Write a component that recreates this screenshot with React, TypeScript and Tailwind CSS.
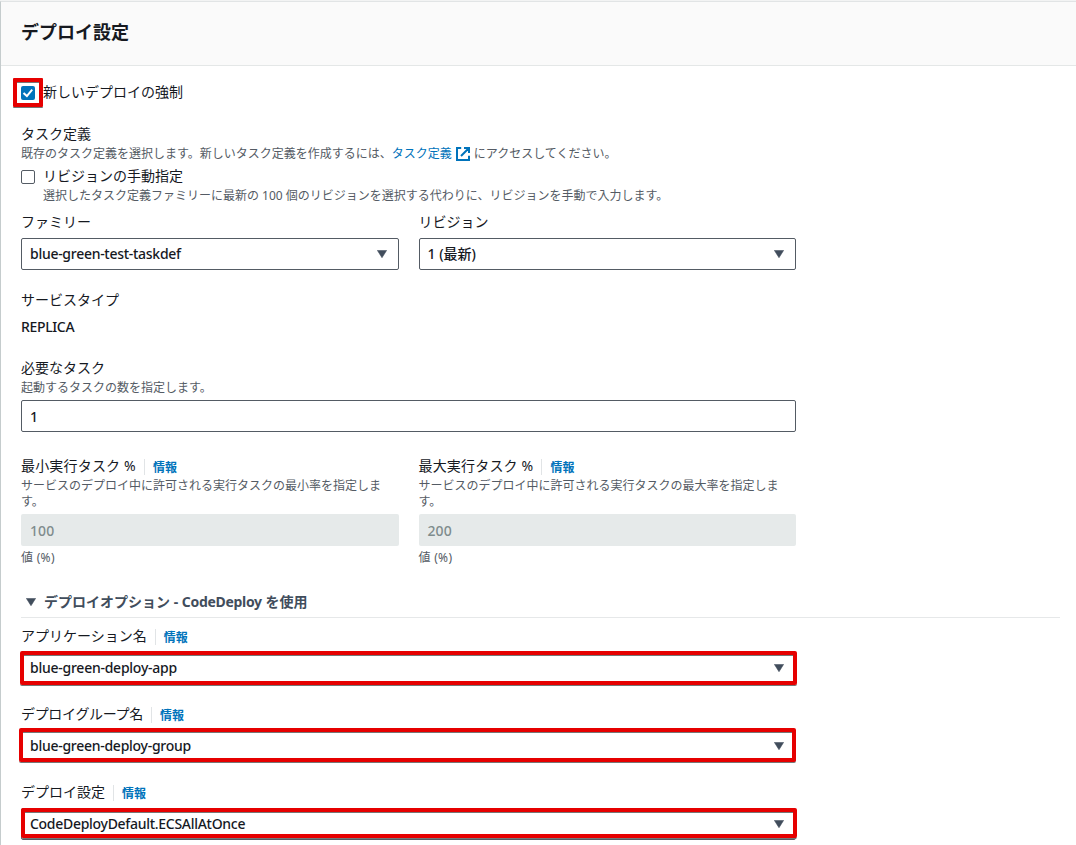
import type { ReactNode } from 'react';

function Caret({ className = '' }: { className?: string }) {
  return (
    <svg className={`h-2 w-[10px] shrink-0 ${className}`} viewBox="0 0 10 8">
      <path d="M0.4 0.4h9.2L5 7.7z" fill="#414d5c" stroke="#414d5c" strokeWidth="0.6" strokeLinejoin="round" />
    </svg>
  );
}

function Label({ children, info = false, tracking = '' }: { children: ReactNode; info?: boolean; tracking?: string }) {
  return (
    <div className="flex h-[22px] items-center whitespace-nowrap text-sm leading-[22px]">
      <span className={`-mt-0.5 ${tracking}`}>{children}</span>
      {info && (
        <span className="ml-2 flex h-4 items-center border-l border-[#e1e4e6] pl-2 pt-0.5 text-xs font-bold text-[#0073bb]">
          情報
        </span>
      )}
    </div>
  );
}

function Hint({ children }: { children: ReactNode }) {
  return <p className="text-xs leading-4 text-[#545b64]">{children}</p>;
}

function Select({ value, highlight = '', tracking = '' }: { value: string; highlight?: string; tracking?: string }) {
  return (
    <div className="relative mt-1 flex h-8 items-center justify-between rounded-[2px] border border-[#545b64] bg-white pl-2 pr-[11px]">
      <span className={`text-sm font-medium leading-[22px] ${tracking}`}>{value}</span>
      <Caret />
      {highlight && (
        <div
          className={`absolute rounded-[2px] border-4 border-[#e60000] shadow-[0_1px_0_#777,inset_0_1px_0_#777] ${highlight}`}
        />
      )}
    </div>
  );
}

function DisabledField({ value }: { value: string }) {
  return (
    <div className="mt-1 flex h-8 items-center rounded-[2px] bg-[#e6eaea] pl-[9px] pt-0.5 text-sm font-medium tracking-[0.1px] text-[#7f8c8d]">
      {value}
    </div>
  );
}

function ExternalIcon() {
  return (
    <svg className="ml-1 mr-1 inline-block h-[14px] w-[14px] -translate-y-px align-middle" viewBox="0 0 14 14" fill="none" stroke="#0073bb" strokeWidth="2">
      <path d="M5.2 1H1v12h12V8.8M8 1h5v5M13 1L5 9" />
    </svg>
  );
}

export default function App() {
  return (
    <div className="h-[845px] w-full overflow-hidden bg-[#f2f3f3] pt-px font-['Noto_Sans','Noto_Sans_CJK_JP',sans-serif] text-[#16191f]">
      <section className="h-[844px] border-l border-t border-l-[#c5cccd] border-t-[#e1e4e5] bg-white">
        <header className="flex h-16 items-center border-b border-[#e4e7e7] bg-[#fafafa] pb-1 pl-5">
          <h2 className="text-lg font-bold leading-[22px]">デプロイ設定</h2>
        </header>
        <div className="pl-5 pr-4 pt-4">
          <div className="flex h-[22px] items-center">
            <div className="relative flex h-[14px] w-[14px] items-center justify-center rounded-[2px] bg-[#0073bb]">
              <svg className="h-[14px] w-[14px]" viewBox="0 0 14 14" fill="none" stroke="#fff" strokeWidth="2">
                <path d="M2.5 7l3.4 3.1L11.2 3.6" />
              </svg>
              <div className="absolute -left-2 -top-2 h-[29px] w-[30px] rounded-[1px] border-4 border-[#e60000] shadow-[0_1px_0_#777,inset_0_1px_0_#777]" />
            </div>
            <span className="-mt-0.5 ml-2 text-sm leading-[22px]">新しいデプロイの強制</span>
          </div>

          <div className="mt-5">
            <Label>タスク定義</Label>
            <Hint>
              既存のタスク定義を選択します。新しいタスク定義を作成するには、
              <a className="text-[#0073bb]">タスク定義</a>
              <ExternalIcon />
              にアクセスしてください。
            </Hint>
          </div>

          <div className="mt-1 flex">
            <div className="mt-1 h-[14px] w-[14px] shrink-0 rounded-[2px] border border-[#545b64] bg-white" />
            <div className="ml-2">
              <Label>リビジョンの手動指定</Label>
              <Hint>選択したタスク定義ファミリーに最新の 100 個のリビジョンを選択する代わりに、リビジョンを手動で入力します。</Hint>
            </div>
          </div>

          <div className="mt-2 grid w-[775px] grid-cols-2 gap-5">
            <div>
              <Label>ファミリー</Label>
              <Select value="blue-green-test-taskdef" tracking="tracking-[-0.28px]" />
            </div>
            <div>
              <Label>リビジョン</Label>
              <Select value="1 (最新)" />
            </div>
          </div>

          <div className="mt-5">
            <Label>サービスタイプ</Label>
            <div className="mt-1 text-sm font-medium leading-[22px] tracking-[-0.35px]">REPLICA</div>
          </div>

          <div className="mt-5 w-[775px]">
            <Label>必要なタスク</Label>
            <Hint>起動するタスクの数を指定します。</Hint>
            <div className="mt-1 flex h-8 items-center rounded-[2px] border border-[#545b64] bg-white pl-2 pt-0.5 text-sm font-medium">1</div>
          </div>

          <div className="mt-6 grid w-[775px] grid-cols-2 gap-5">
            <div>
              <Label info tracking="tracking-[0.18px]">最小実行タスク %</Label>
              <Hint>サービスのデプロイ中に許可される実行タスクの最小率を指定します。</Hint>
              <DisabledField value="100" />
              <div className="mt-1 tracking-[0.3px]"><Hint>値 (%)</Hint></div>
            </div>
            <div>
              <Label info tracking="tracking-[0.18px]">最大実行タスク %</Label>
              <Hint>サービスのデプロイ中に許可される実行タスクの最大率を指定します。</Hint>
              <DisabledField value="200" />
              <div className="mt-1 tracking-[0.3px]"><Hint>値 (%)</Hint></div>
            </div>
          </div>

          <div className="mt-[25px] flex h-[27px] border-b border-[#e6e8e9] text-sm font-bold leading-[22px] text-[#414d5c]">
            <Caret className="ml-[5px] mr-2 mt-[7px]" />
            <span>デプロイオプション - <span className="tracking-[-0.3px]">CodeDeploy</span> を使用</span>
          </div>

          <div className="mt-2 flex w-[775px] flex-col gap-5">
            <div>
              <Label info>アプリケーション名</Label>
              <Select value="blue-green-deploy-app" tracking="tracking-[-0.25px]" highlight="-left-0.5 -right-0.5 -top-0.5 h-[34px]" />
            </div>
            <div>
              <Label info tracking="tracking-[-0.33px]">デプロイグループ名</Label>
              <Select value="blue-green-deploy-group" tracking="tracking-[-0.27px]" highlight="-left-[3px] -right-px -top-[3px] h-[34px]" />
            </div>
            <div>
              <Label info>デプロイ設定</Label>
              <Select value="CodeDeployDefault.ECSAllAtOnce" tracking="tracking-[-0.29px]" highlight="-left-px -right-0.5 -top-px h-[30px]" />
            </div>
          </div>
        </div>
      </section>
    </div>
  );
}
